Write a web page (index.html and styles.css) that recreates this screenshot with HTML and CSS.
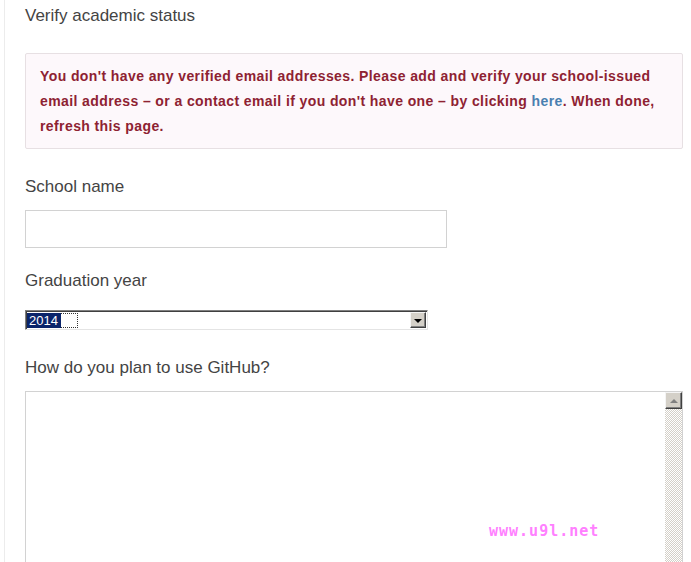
FILE: index.html
```html
<!DOCTYPE html>
<html lang="en">
<head>
<meta charset="utf-8">
<title>Verify academic status</title>
<link rel="stylesheet" href="styles.css">
</head>
<body>
<div class="page">
  <h2 class="title">Verify academic status</h2>
  <div class="flash-error">
    You don't have any verified email addresses. Please add and verify your school-issued email address – or a contact email if you don't have one – by clicking <a href="#">here</a>. When done, refresh this page.
  </div>

  <label class="label label-school">School name</label>
  <div class="text-input"></div>

  <label class="label label-year">Graduation year</label>
  <div class="select">
    <div class="select-value"><span class="focus"><span class="hl">2014</span></span></div>
    <div class="select-btn"><span class="tri-down"></span></div>
  </div>

  <label class="label label-plan">How do you plan to use GitHub?</label>
  <div class="textarea">
    <div class="textarea-body"></div>
    <div class="scrollbar">
      <div class="scroll-btn"><span class="tri-up"></span></div>
      <div class="scroll-track"></div>
    </div>
    <span class="watermark">www.u9l.net</span>
  </div>
</div>
</body>
</html>
```

FILE: styles.css
```css
html, body {
  margin: 0;
  padding: 0;
  background: #fff;
  height: 100%;
  overflow: hidden;
}

.page {
  margin-left: 4px;
  border-left: 1px solid #ececec;
  padding: 6px 8px 0 20px;
  min-height: 100%;
  box-sizing: border-box;
  font-family: "Liberation Sans", Arial, sans-serif;
}

.title {
  margin: 0 0 27px;
  font-size: 17px;
  line-height: 20px;
  font-weight: normal;
  color: #444;
}

.flash-error {
  width: 658px;
  box-sizing: border-box;
  padding: 10px 14px 9px;
  border: 1px solid #e7e0e3;
  border-radius: 2px;
  background: #fdf8fb;
  color: #8e2232;
  font-size: 14px;
  font-weight: bold;
  line-height: 25px;
  letter-spacing: 0.4px;
}

.flash-error a {
  color: #4a7fb0;
  text-decoration: none;
}

.label {
  display: block;
  font-size: 17px;
  line-height: 20px;
  color: #444;
}

.label-school { margin-top: 28px; }
.label-year { margin-top: 23px; }
.label-plan { margin-top: 28px; }

.text-input {
  margin-top: 13px;
  width: 422px;
  height: 38px;
  box-sizing: border-box;
  border: 1px solid #d2d2d2;
  background: #fff;
}

.select {
  margin-top: 19px;
  width: 403px;
  height: 20px;
  box-sizing: border-box;
  display: flex;
  align-items: stretch;
  border-top: 1px solid #808080;
  border-left: 1px solid #808080;
  border-right: 1px solid #e4e4e4;
  border-bottom: 1px solid #e4e4e4;
  box-shadow: inset 1px 1px 0 #404040;
  background: #fff;
  padding: 1px 1px 0 1px;
}

.select-value {
  flex: 1;
  display: flex;
  align-items: center;
}

.focus {
  display: flex;
  width: 51px;
  height: 15px;
  box-sizing: border-box;
  border: 1px dotted #333;
}

.hl {
  background: #0a246a;
  color: #fff;
  font-family: "Liberation Sans", Arial, sans-serif;
  font-size: 13px;
  line-height: 15px;
  margin: -1px 0 0 -1px;
  padding: 0 3px 0 2px;
  height: 15px;
}

.select-btn {
  width: 16px;
  height: 16px;
  box-sizing: border-box;
  background: #d4d0c8;
  border-top: 1px solid #f4f4f4;
  border-left: 1px solid #f4f4f4;
  border-right: 1px solid #404040;
  border-bottom: 1px solid #404040;
  box-shadow: inset -1px -1px 0 #808080;
  display: flex;
  align-items: center;
  justify-content: center;
}

.tri-down {
  width: 0;
  height: 0;
  border-left: 4px solid transparent;
  border-right: 4px solid transparent;
  border-top: 4px solid #000;
  margin-top: 1px;
}

.textarea {
  position: relative;
  margin-top: 13px;
  width: 658px;
  height: 220px;
  box-sizing: border-box;
  border: 1px solid #d2d2d2;
  display: flex;
  background: #fff;
}

.textarea-body {
  flex: 1;
}

.scrollbar {
  width: 17px;
  display: flex;
  flex-direction: column;
}

.scroll-btn {
  height: 17px;
  box-sizing: border-box;
  background: #d4d0c8;
  border-top: 1px solid #f4f4f4;
  border-left: 1px solid #f4f4f4;
  border-right: 1px solid #404040;
  border-bottom: 1px solid #404040;
  box-shadow: inset -1px -1px 0 #808080;
  display: flex;
  align-items: center;
  justify-content: center;
}

.tri-up {
  width: 0;
  height: 0;
  border-left: 4px solid transparent;
  border-right: 4px solid transparent;
  border-bottom: 4px solid #808080;
}

.scroll-track {
  flex: 1;
  background: repeating-conic-gradient(#d4d0c8 0 25%, #ffffff 0 50%) 0 0 / 2px 2px;
}

.watermark {
  position: absolute;
  left: 463px;
  top: 130px;
  font-family: "DejaVu Sans Mono", monospace;
  font-weight: bold;
  font-size: 15px;
  letter-spacing: 1px;
  color: #ff80ff;
}
```
